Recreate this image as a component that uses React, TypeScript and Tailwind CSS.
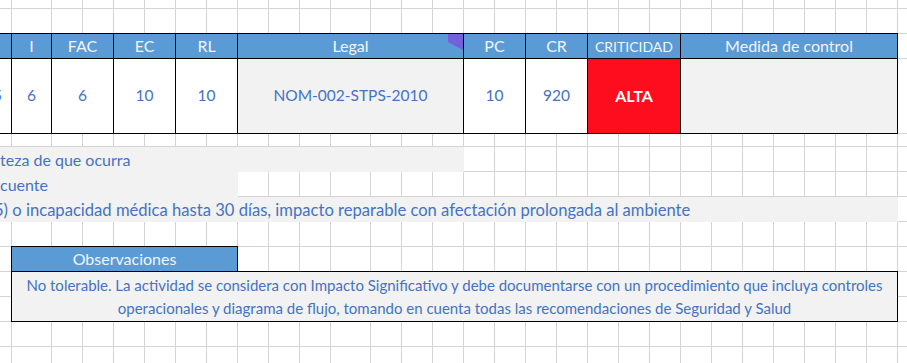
import type { ReactNode } from "react";

const ROWS = 14;
const COLS = 30;

const blueText = "text-[#4472c4]";

function Gridlines() {
  const cells: ReactNode[] = [];
  for (let r = 1; r <= ROWS; r++) {
    for (let c = 1; c <= COLS; c++) {
      cells.push(
        <div
          key={`${r}-${c}`}
          className="border-r border-b border-[#d4d4d4]"
          style={{ gridRow: r, gridColumn: c }}
        />
      );
    }
  }
  return <>{cells}</>;
}

const headers = [
  { label: "", span: "col-start-1 col-end-2" },
  { label: "I", span: "col-start-2 col-end-3" },
  { label: "FAC", span: "col-start-3 col-end-5" },
  { label: "EC", span: "col-start-5 col-end-7" },
  { label: "RL", span: "col-start-7 col-end-9" },
  { label: "Legal", span: "col-start-9 col-end-16", comment: true },
  { label: "PC", span: "col-start-16 col-end-18" },
  { label: "CR", span: "col-start-18 col-end-20" },
  { label: "CRITICIDAD", span: "col-start-20 col-end-23", small: true },
  { label: "Medida de control", span: "col-start-23 col-end-30" },
];

const values = [
  { value: "5", span: "col-start-1 col-end-2", cut: true },
  { value: "6", span: "col-start-2 col-end-3" },
  { value: "6", span: "col-start-3 col-end-5" },
  { value: "10", span: "col-start-5 col-end-7" },
  { value: "10", span: "col-start-7 col-end-9" },
  { value: "NOM-002-STPS-2010", span: "col-start-9 col-end-16", bg: "bg-[#f2f2f2]" },
  { value: "10", span: "col-start-16 col-end-18" },
  { value: "920", span: "col-start-18 col-end-20" },
  { value: "ALTA", span: "col-start-20 col-end-23", bg: "bg-[#fe0d1e]", alert: true },
  { value: "", span: "col-start-23 col-end-30", bg: "bg-[#f2f2f2]" },
];

export default function App() {
  return (
    <div className="h-[363px] w-[907px] overflow-hidden bg-white font-['Lato',sans-serif]">
      <div className="grid grid-cols-[12px_40px_repeat(9,31px)_40px_repeat(17,31px)_31px] grid-rows-[9px_25px_25px_75px_13px_25px_25px_25px_25px_25px_25px_25px_25px_25px]">
        <Gridlines />

        {headers.map((h, i) => (
          <div
            key={`h${i}`}
            className={`${h.span} row-start-3 row-end-4 relative -mt-px flex items-center justify-center border-t border-r border-b border-black bg-[#5b9bd5] text-[#f0f5fb] ${
              h.small ? "text-[14px]" : "text-[16px]"
            }`}
          >
            {h.label}
            {h.comment && (
              <svg className="absolute top-0 right-0 h-[16px] w-[15px]" viewBox="0 0 15 16">
                <polygon points="0,0 15,0 15,16 0,8" fill="#7261d9" />
              </svg>
            )}
          </div>
        ))}

        {values.map((v, i) => (
          <div
            key={`v${i}`}
            className={`${v.span} row-start-4 row-end-5 flex items-center overflow-hidden border-r border-b border-black ${
              v.cut ? "justify-start" : "justify-center"
            } ${v.bg ?? "bg-white"} ${
              v.alert ? "text-[16px] font-bold text-white" : `text-[15.5px] ${blueText}`
            }`}
          >
            <span className={v.cut ? "-ml-[7px]" : ""}>{v.value}</span>
          </div>
        ))}

        <div className={`col-start-1 col-end-16 row-start-6 row-end-7 flex items-center overflow-hidden whitespace-nowrap bg-[#f2f2f2] pt-px text-[16px] ${blueText}`}>
          teza de que ocurra
        </div>
        <div className={`col-start-1 col-end-9 row-start-7 row-end-8 flex items-center overflow-hidden whitespace-nowrap bg-[#f2f2f2] pt-px text-[16px] ${blueText}`}>
          cuente
        </div>
        <div className={`col-start-1 col-end-30 row-start-8 row-end-9 flex items-center overflow-hidden whitespace-nowrap bg-[#f2f2f2] pt-px text-[16.6px] ${blueText}`}>
          <span className="-ml-[6px]">
            5) o incapacidad médica hasta 30 días, impacto reparable con afectación prolongada al ambiente
          </span>
        </div>

        <div className="col-start-2 col-end-9 row-start-10 row-end-11 -mt-px -ml-px flex items-center justify-center border border-black bg-[#5b9bd5] text-[16px] text-[#f0f5fb]">
          Observaciones
        </div>
        <div className={`col-start-2 col-end-30 row-start-11 row-end-13 -mt-px -ml-px flex items-center justify-center border border-black bg-[#f2f2f2] text-center text-[15px] leading-[23px] ${blueText}`}>
          <p>
            No tolerable. La actividad se considera con Impacto Significativo y debe documentarse con un procedimiento que incluya controles
            <br />
            operacionales y diagrama de flujo, tomando en cuenta todas las recomendaciones de Seguridad y Salud
          </p>
        </div>
      </div>
    </div>
  );
}
